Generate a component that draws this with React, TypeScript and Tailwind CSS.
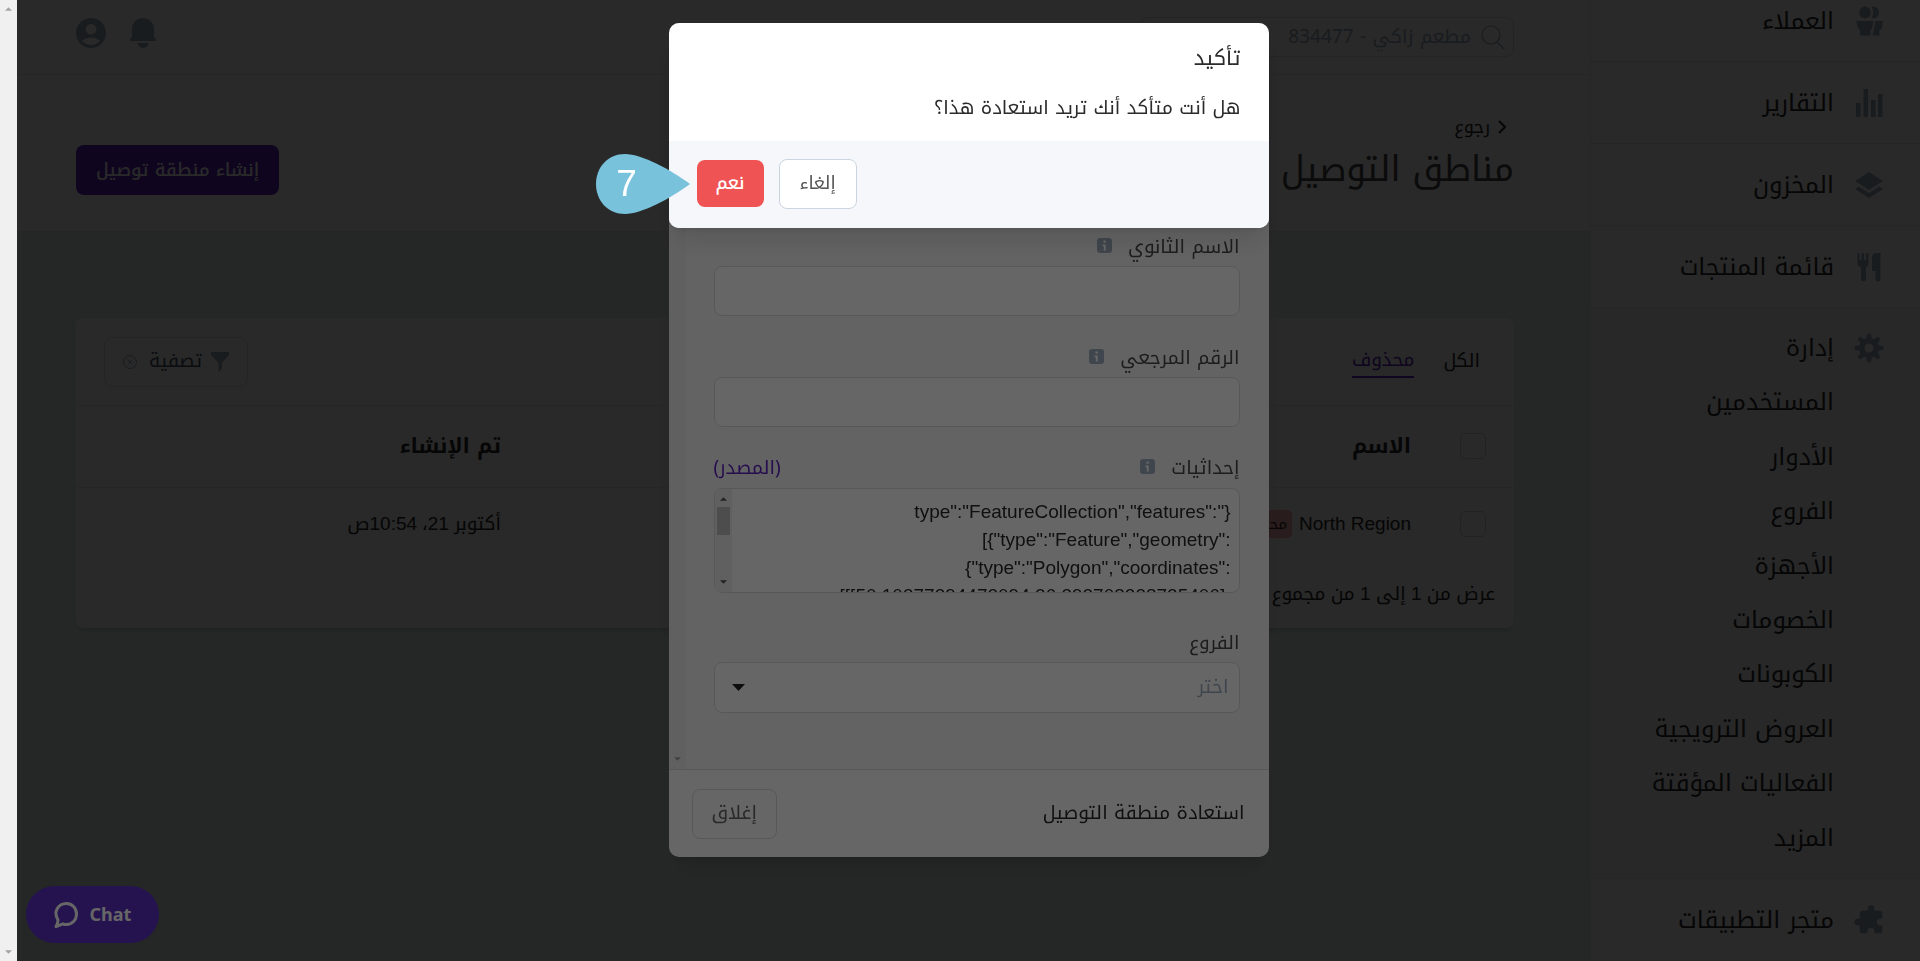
import { MdAccountCircle, MdExtension } from 'react-icons/md';

const GEO_JSON =
  '{"type":"FeatureCollection","features":[{"type":"Feature","geometry":{"type":"Polygon","coordinates":[[[50.10377394472094,26.392708228725406],[50.1184,26.4012]]]}}]}';

const manageLinks = [
  'المستخدمين',
  'الأدوار',
  'الفروع',
  'الأجهزة',
  'الخصومات',
  'الكوبونات',
  'العروض الترويجية',
  'الفعاليات المؤقتة',
  'المزيد',
];

function CustomersIcon() {
  return (
    <svg viewBox="0 0 28 30" className="w-7 h-[30px]" fill="currentColor" aria-hidden="true">
      <ellipse cx="10" cy="6.5" rx="5.8" ry="6" />
      <path d="M16.5 1.2c4-1.6 7.6 1.2 7.6 5.3s-3.600 6.900-7.600 5.300c2.200-3 2.200-7.600 0-10.600z" />
      <path d="M1 15h17.500l-1.500 8-1.500 1v5.500H5V24l-2-2z" />
      <path d="M20.500 15H28l-1.500 8-2 1.500v5H17.500l1.300-6z" />
    </svg>
  );
}

function ReportsIcon() {
  return (
    <svg viewBox="0 0 28 30" className="w-7 h-[30px]" fill="currentColor" aria-hidden="true">
      <path d="M1 15h4.500v14H1zM8.500 1H13v28H8.500zM16 12h4.500v17H16zM23 6h4.500v23H23z" />
    </svg>
  );
}

function InventoryIcon() {
  return (
    <svg viewBox="0 0 28 26" className="w-7 h-[26px]" fill="currentColor" aria-hidden="true">
      <path d="M14 0l14 9-14 9L0 9z" />
      <path d="M3.500 14.500L14 21l10.500-6.500L28 17l-14 9-14-9z" />
    </svg>
  );
}

function MenuIcon() {
  return (
    <svg viewBox="0 0 28 30" className="w-7 h-[30px]" fill="currentColor" aria-hidden="true">
      <path d="M2.500 1.500c0-.8 2-.8 2 0V8h2V1.500c0-.8 2.600-.8 2.600 0V8h2V1.500c0-.8 2.400-.8 2.400 0v10c0 2-1 3-2.500 3.800V27c0 3-5 3-5 0V15.300C3.500 14.500 2.500 13.500 2.500 11.500z" />
      <path d="M20.500 1h5v26.500c0 2.500-5 2.500-5 0V19h-3.500V5.500C17 3 18.500 1 20.500 1z" />
    </svg>
  );
}

function GearIcon() {
  return (
    <svg viewBox="0 0 30 30" className="w-[30px] h-[30px]" fill="currentColor" aria-hidden="true">
      <path
        fillRule="evenodd"
        d="M15 5a10 10 0 1 0 0 20 10 10 0 0 0 0-20zm0 5.500a4.500 4.500 0 1 1 0 9 4.500 4.500 0 0 1 0-9z"
      />
      {[0, 45, 90, 135, 180, 225, 270, 315].map((angle) => (
        <path key={angle} d="M12 7l1-5.500c.2-1.300 3.800-1.300 4 0L18 7z" transform={`rotate(${angle} 15 15)`} />
      ))}
    </svg>
  );
}

function BellIcon() {
  return (
    <svg viewBox="0 0 26 32" className="w-[26px] h-8" fill="currentColor" aria-hidden="true">
      <path d="M2 20v-7.500C2 5.500 7 1 13 1s11 4.500 11 11.500V20l1.500 1.500c1 1 .5 2.500-.5 2.500H1c-1 0-1.500-1.500-.5-2.500z" />
      <path d="M7.500 26h11c-.8 3.500-2.800 5-5.500 5s-4.700-1.500-5.500-5z" />
    </svg>
  );
}

function InfoIcon() {
  return (
    <svg viewBox="0 0 15 15" className="w-[15px] h-[15px] mb-1" aria-hidden="true">
      <rect width="15" height="15" rx="3" fill="#a0aec0" />
      <rect x="6.500" y="2.500" width="2.200" height="2.200" fill="#fff" />
      <path d="M5.500 6.500h3.200v6H6.800V8.200H5.500z" fill="#fff" />
    </svg>
  );
}

function Arrow({ down = false }: { down?: boolean }) {
  return (
    <svg viewBox="0 0 8 4" className="w-[7px] h-1" fill="currentColor" aria-hidden="true">
      <path d={down ? 'M0 0h8L4 4z' : 'M0 4h8L4 0z'} />
    </svg>
  );
}

function NavItem({ label, icon }: { label: string; icon: React.ReactNode }) {
  return (
    <a href="#" className="flex h-[82px] items-center border-b border-[#edf0f4] pr-9">
      <span className="flex w-[30px] justify-center text-[#a0aec0]">{icon}</span>
      <span className="mr-5 text-[24px]">{label}</span>
    </a>
  );
}

function Sidebar() {
  return (
    <aside className="w-[330px] shrink-0 border-l border-[#edf0f4] bg-white text-[#2a2a2a]">
      <nav className="-mt-5">
        <NavItem label="العملاء" icon={<CustomersIcon />} />
        <NavItem label="التقارير" icon={<ReportsIcon />} />
        <NavItem label="المخزون" icon={<InventoryIcon />} />
        <NavItem label="قائمة المنتجات" icon={<MenuIcon />} />
        <div className="border-b border-[#edf0f4] bg-[#f9f9fb] pt-[13px] pb-[13px]">
          <a href="#" className="flex h-[54px] items-center pr-9">
            <span className="flex w-[30px] justify-center text-[#a0aec0]"><GearIcon /></span>
            <span className="mr-5 text-[24px]">إدارة</span>
          </a>
          <ul className="flex h-[490px] flex-col pr-[86px] text-[24px]">
            {manageLinks.map((label) => (
              <li key={label} className="flex flex-1 items-center">
                <a href="#">{label}</a>
              </li>
            ))}
          </ul>
        </div>
        <NavItem label="متجر التطبيقات" icon={<MdExtension className="h-8 w-8 shrink-0 -scale-x-100" />} />
      </nav>
    </aside>
  );
}

function TopBar() {
  return (
    <header className="flex h-[75px] items-start justify-between border-b border-[#edf0f4] bg-white pt-[17px] pr-[76px] pl-[59px]">
      <label className="flex h-10 w-[374px] items-center gap-2.5 rounded-lg border border-[#dfe3ea] pr-2">
        <svg viewBox="0 0 24 24" className="h-6 w-6 shrink-0" fill="none" stroke="#a0aec0" strokeWidth="1.200" aria-hidden="true">
          <circle cx="10" cy="10" r="9" />
          <path d="M16 17l7 7" />
        </svg>
        <input
          aria-label="بحث"
          placeholder="مطعم زاكي - 834477"
          className="w-full min-w-0 bg-transparent text-[19px] outline-none placeholder:text-[#a0aec0]"
        />
      </label>
      <div className="flex gap-6 text-[#a0aec0]">
        <button type="button" aria-label="الإشعارات"><BellIcon /></button>
        <button type="button" aria-label="الحساب"><MdAccountCircle className="h-9 w-9 -m-[3px]" /></button>
      </div>
    </header>
  );
}

function ZonesTable() {
  return (
    <section className="mt-[86px] mr-[76px] ml-[59px] rounded-lg bg-white shadow-md">
      <div className="flex h-[88px] items-center justify-between border-b border-[#edf0f4] pr-[34px] pl-7 text-[19px]">
        <div className="flex gap-[29px]">
          <a href="#" className="flex h-8 items-center">الكل</a>
          <a href="#" className="flex h-8 items-center border-b-2 border-[#6022c3] text-[#6022c3]">محذوف</a>
        </div>
        <button type="button" className="flex h-[50px] items-center rounded-lg border border-[#dfe3ea] px-[18px] text-[#4a5568]">
          <svg viewBox="0 0 18 20" className="h-5 w-[18px]" fill="#a0aec0" aria-hidden="true">
            <path d="M0 0h18v3l-7 8v5.500L7.500 20v-9L0 3z" />
          </svg>
          <span className="mr-[9px] ml-3">تصفية</span>
          <svg viewBox="0 0 14 14" className="h-3.5 w-3.5" fill="none" stroke="#a0aec0" aria-hidden="true">
            <circle cx="7" cy="7" r="6.500" />
            <path d="M4.500 4.500l5 5M9.500 4.500l-5 5" />
          </svg>
        </button>
      </div>
      <table className="w-full table-fixed text-right text-[19px]">
        <thead className="text-[21px]">
          <tr className="h-[81px] border-b border-[#edf0f4]">
            <th className="w-[103px] pr-7">
              <input type="checkbox" aria-label="تحديد الكل" className="block h-[26px] w-[26px] appearance-none rounded-[5px] border border-[#cbd5e0]" />
            </th>
            <th className="w-[63%] font-bold">الاسم</th>
            <th className="pr-1 font-bold">تم الإنشاء</th>
          </tr>
        </thead>
        <tbody>
          <tr className="h-[74px]">
            <td className="pr-7">
              <input type="checkbox" aria-label="North Region" className="block h-[26px] w-[26px] appearance-none rounded-[5px] border border-[#cbd5e0]" />
            </td>
            <td className="font-['Liberation_Sans','Noto_Kufi_Arabic','Noto_Sans_Arabic',sans-serif]">
              <div className="flex items-center gap-[7px]">
                <span dir="ltr">North Region</span>
                <span className="flex h-7 items-center rounded-[5px] bg-[#feb2b2] px-[5px] text-[15px]">محذوف</span>
              </div>
            </td>
            <td className="pr-1 font-['Liberation_Sans','Noto_Kufi_Arabic','Noto_Sans_Arabic',sans-serif]">أكتوبر 21، 10:54ص</td>
          </tr>
        </tbody>
      </table>
      <p className="flex h-[67px] items-center pr-[19px] text-[19px] font-['Liberation_Sans','Noto_Kufi_Arabic','Noto_Sans_Arabic',sans-serif]">
        عرض من 1 إلى 1 من مجموع 1
      </p>
    </section>
  );
}

function EditDialog() {
  return (
    <div className="fixed inset-0 left-[17px] flex items-start justify-center bg-black/60 pt-[23px]">
      <form className="w-[600px] overflow-hidden rounded-[10px] bg-white text-[19px] text-[#4a4a4a] shadow-xl">
        <div className="flex bg-[#f8f8f8]">
          <div className="flex-1 pt-[204px] pr-[29px] pb-14 pl-7">
            <label htmlFor="secondary" className="flex h-[39px] items-center gap-4 pt-px">الاسم الثانوي <InfoIcon /></label>
            <input id="secondary" className="block h-[50px] w-full rounded-lg border border-[#dddde6] bg-white px-2" />

            <label htmlFor="reference" className="mt-[22px] flex h-[39px] items-center gap-4 pt-px">الرقم المرجعي <InfoIcon /></label>
            <input id="reference" className="block h-[50px] w-full rounded-lg border border-[#dddde6] bg-white px-2" />

            <div className="mt-[22px] flex h-[39px] items-center justify-between">
              <label htmlFor="coordinates" className="flex items-center gap-4">إحداثيات <InfoIcon /></label>
              <a href="#" className="text-[#6022c3]">(المصدر)</a>
            </div>
            <div className="flex h-[105px] overflow-hidden rounded-lg border border-[#dddde6] bg-white">
              <textarea
                id="coordinates"
                defaultValue={GEO_JSON}
                className="flex-1 resize-none overflow-hidden px-2 pt-[9px] leading-7 text-[#2a2a2a] outline-none font-['Liberation_Sans',sans-serif]"
              />
              <div className="flex w-[17px] flex-col items-center justify-between bg-[#f1f1f1] py-2 text-[#555]" aria-hidden="true">
                <Arrow />
                <div className="mt-1.5 mb-auto h-7 w-[13px] bg-[#c1c1c1]" />
                <Arrow down />
              </div>
            </div>

            <label htmlFor="branches" className="mt-[30px] flex h-[39px] items-center pt-px">الفروع</label>
            <div className="relative">
              <select id="branches" className="block h-[51px] w-full appearance-none rounded-lg border border-[#dddde6] bg-white px-2.5 text-[#a0aec0]">
                <option>اختر</option>
              </select>
              <svg viewBox="0 0 13 7" className="pointer-events-none absolute top-[22px] left-[18px] h-[7px] w-[13px]" fill="#222" aria-hidden="true">
                <path d="M0 0h13L6.500 7z" />
              </svg>
            </div>
          </div>
          <div className="flex w-[17px] flex-col items-center justify-end bg-[#f1f1f1] pb-2 text-[#a3a3a3]" aria-hidden="true">
            <Arrow down />
          </div>
        </div>
        <div className="flex h-[88px] items-center justify-between border-t border-[#dddde6] pr-6 pl-[23px]">
          <button type="button" className="text-[#2a2a2a]">استعادة منطقة التوصيل</button>
          <button type="button" className="h-[50px] rounded-lg border border-[#dddde6] px-[19px] text-[#666]">إغلاق</button>
        </div>
      </form>
    </div>
  );
}

function ConfirmDialog() {
  return (
    <div className="fixed inset-0 left-[17px] flex items-start justify-center bg-black/60 pt-[23px]">
      <div role="dialog" aria-labelledby="confirm-title" className="w-[600px] rounded-[10px] bg-white text-[#2b2b2b] shadow-xl">
        <div className="h-[118px] px-7 pt-[18px]">
          <h2 id="confirm-title" className="h-[34px] text-[21px] leading-[34px]">تأكيد</h2>
          <p className="mt-4 h-[34px] text-[19px] leading-[34px]">هل أنت متأكد أنك تريد استعادة هذا؟</p>
        </div>
        <div className="flex h-[87px] items-center justify-end gap-[15px] rounded-b-[10px] bg-[#f5f7fb] pb-0.5 pl-7 text-[18px]">
          <button type="button" className="h-[50px] rounded-lg border border-[#cbd5e0] bg-white px-5 text-[#555]">إلغاء</button>
          <div className="relative">
            <button type="button" className="block h-[47px] rounded-lg bg-[#ef5353] px-[19px] font-medium text-white">نعم</button>
            <div className="absolute top-1/2 right-full mr-[7px] flex h-[60px] w-[94px] -translate-y-1/2 items-center">
              <svg viewBox="0 0 94 60" className="absolute inset-0" fill="#79c2dc" aria-hidden="true">
                <path d="M94 30C75 44 46 60 29 60 12 60 0 47 0 30S12 0 29 0c17 0 46 16 65 30z" />
              </svg>
              <span dir="ltr" className="relative mr-auto w-[62px] text-center text-[37px] text-white font-['Liberation_Sans',sans-serif]">7</span>
            </div>
          </div>
        </div>
      </div>
    </div>
  );
}

export default function App() {
  return (
    <div
      dir="rtl"
      className="flex h-screen overflow-hidden text-[#2a2a2a] font-['Noto_Kufi_Arabic','Noto_Sans_Arabic','Noto_Sans',sans-serif]"
    >
      <Sidebar />
      <main className="min-w-0 flex-1 bg-[#ecf8f3]">
        <TopBar />
        <div className="flex h-[157px] items-end justify-between border-b border-[#edf0f4] bg-white pr-[76px] pb-9 pl-[59px]">
          <div>
            <a href="#" className="mb-[3px] flex h-[30px] items-center gap-2 pr-2 text-[18px]">
              <svg viewBox="0 0 8 14" className="h-3.5 w-2" fill="none" stroke="currentColor" strokeWidth="2" aria-hidden="true">
                <path d="M1 1l6 6-6 6" />
              </svg>
              رجوع
            </a>
            <h1 className="text-[35px] leading-[50px] text-[#4a4a4a]">مناطق التوصيل</h1>
          </div>
          <button type="button" className="h-[50px] rounded-lg bg-[#6022c3] px-5 text-[18px] font-medium text-white">
            إنشاء منطقة توصيل
          </button>
        </div>
        <ZonesTable />
      </main>
      <div className="flex w-[17px] shrink-0 flex-col items-center justify-between bg-[#f0f0f0] py-[7px] text-[#a3a3a3]" aria-hidden="true">
        <Arrow />
        <Arrow down />
      </div>

      <EditDialog />
      <button
        type="button"
        dir="ltr"
        className="fixed bottom-[18px] left-[26px] flex h-[57px] w-[133px] items-center justify-center gap-3 rounded-full bg-[#5a30c6] text-[18px] font-bold text-white font-['Noto_Sans',sans-serif]"
      >
        <svg viewBox="0 0 24 26" className="h-[26px] w-6" fill="none" stroke="currentColor" strokeWidth="3" strokeLinejoin="round" aria-hidden="true">
          <path d="M4 18C-1 10 4 1.500 12.500 1.500 18 1.500 22.500 6 22.500 12S18 22.500 12.500 22.500c-1.500 0-2.500-.2-3.500-.7L2 24.500c1.500-2.500 2-4.500 2-6.500z" />
        </svg>
        Chat
      </button>
      <ConfirmDialog />
    </div>
  );
}
